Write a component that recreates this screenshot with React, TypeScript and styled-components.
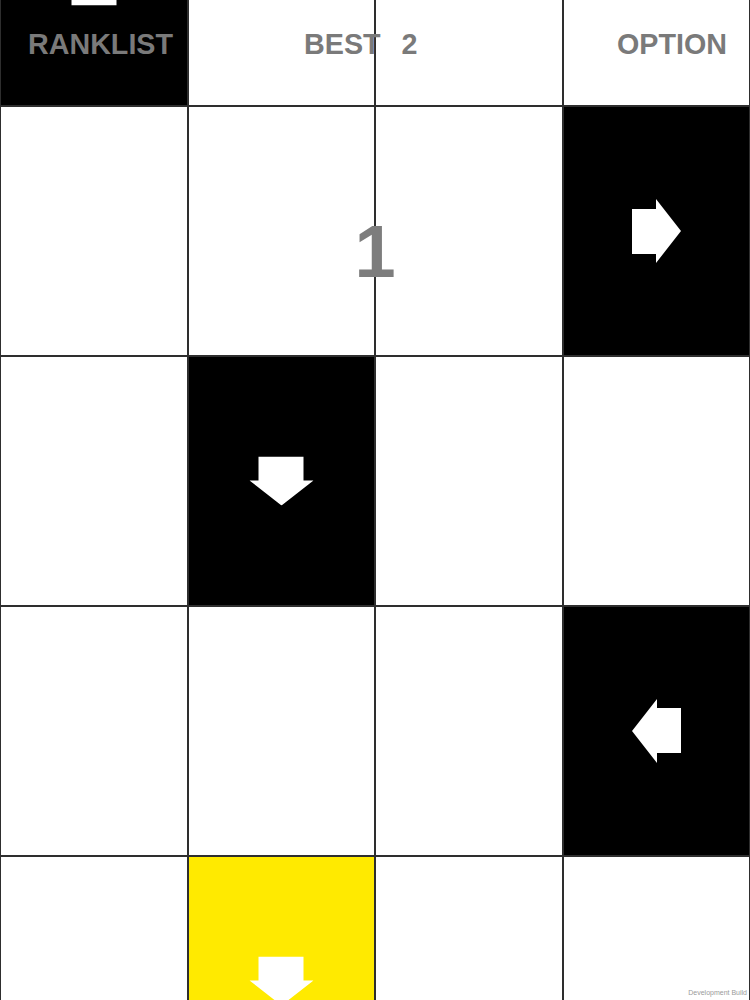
import styled, { createGlobalStyle } from "styled-components";

type Dir = "up" | "down" | "left" | "right";
type Tile = { color: "white" | "black" | "yellow"; arrow?: Dir };

const rows: Tile[][] = [
  [{ color: "black", arrow: "up" }, { color: "white" }, { color: "white" }, { color: "white" }],
  [{ color: "white" }, { color: "white" }, { color: "white" }, { color: "black", arrow: "right" }],
  [{ color: "white" }, { color: "black", arrow: "down" }, { color: "white" }, { color: "white" }],
  [{ color: "white" }, { color: "white" }, { color: "white" }, { color: "black", arrow: "left" }],
  [{ color: "white" }, { color: "yellow", arrow: "down" }, { color: "white" }, { color: "white" }],
];

const fills = { white: "#ffffff", black: "#000000", yellow: "#ffea00" };
const turns = { right: 0, down: 90, left: 180, up: -90 };

const Arrow = ({ dir }: { dir: Dir }) => (
  <ArrowSvg viewBox="0 0 49 64" width="49" height="64" $turn={turns[dir]}>
    <polygon points="0,10 24,10 24,0 49,32 24,64 24,55 0,55" fill="#ffffff" />
  </ArrowSvg>
);

const App = () => {
  return (
    <>
      <GlobalStyle />
      <Screen>
        <Board>
          {rows.map((row, r) =>
            row.map((tile, c) => (
              <Cell key={`${r}-${c}`} $bg={fills[tile.color]}>
                {tile.arrow && <Arrow dir={tile.arrow} />}
              </Cell>
            ))
          )}
        </Board>

        <Header>
          <Label>RANKLIST</Label>
          <Best>
            BEST<Gap />2
          </Best>
          <Option>OPTION</Option>
        </Header>

        <Score>1</Score>
        <Watermark>Development Build</Watermark>
      </Screen>
    </>
  );
};

export default App;

const GlobalStyle = createGlobalStyle`
  html, body {
    margin: 0;
    padding: 0;
    background: #ffffff;
    overflow: hidden;
  }
  * { box-sizing: border-box; }
`;

const Screen = styled.div`
  position: relative;
  width: 750px;
  height: 1000px;
  overflow: hidden;
  font-family: "Liberation Sans", Arial, sans-serif;
`;

const Board = styled.div`
  display: grid;
  grid-template-columns: repeat(4, 1fr);
  grid-auto-rows: 250px;
  margin-top: -144px;
`;

const Cell = styled.div<{ $bg: string }>`
  background: ${(p) => p.$bg};
  border: 1px solid #2e2e2e;
  display: flex;
  align-items: center;
  justify-content: center;
`;

const ArrowSvg = styled.svg<{ $turn: number }>`
  display: block;
  transform: rotate(${(p) => p.$turn}deg);
`;

const Header = styled.div`
  position: absolute;
  top: 0;
  left: 0;
  right: 0;
  display: flex;
  align-items: baseline;
  padding: 28px 23px 0 28px;
  color: #7a7a7a;
  font-weight: 700;
  font-size: 28.7px;
  line-height: 32px;
`;

const Label = styled.div``;

const Best = styled.div`
  display: flex;
  margin-left: 131px;
`;

const Gap = styled.span`
  display: inline-block;
  width: 21px;
`;

const Option = styled.div`
  margin-left: auto;
`;

const Score = styled.div`
  position: absolute;
  top: 215px;
  left: 0;
  right: 0;
  text-align: center;
  color: #7d7d7d;
  font-weight: 700;
  font-size: 74px;
  line-height: 74px;
`;

const Watermark = styled.div`
  position: absolute;
  right: 3px;
  bottom: 4px;
  font-size: 7px;
  color: #9a9a9a;
`;
